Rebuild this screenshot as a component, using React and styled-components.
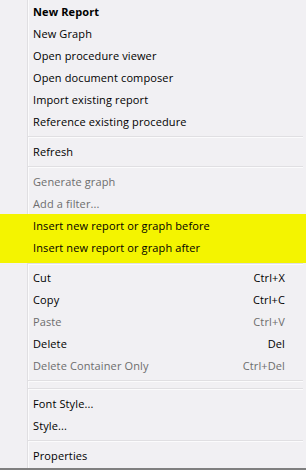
import React from "react";
import styled, { createGlobalStyle } from "styled-components";

const Global = createGlobalStyle`
  html, body { margin: 0; padding: 0; background: #f1f0f3; }
  body { font-family: "Open Sans", "Noto Sans", sans-serif; }
`;

const Menu = styled.div`
  width: 306px;
  height: 470px;
  box-sizing: border-box;
  display: flex;
  flex-direction: column;
  background-color: #f1f0f3;
  background-image: linear-gradient(
    to right,
    transparent 27px,
    #e0dfe2 27px,
    #e0dfe2 28px,
    #fbfbfc 28px,
    #fbfbfc 29px,
    transparent 29px
  );
  border-bottom: 2px solid #7f7f7f;
  overflow: hidden;
`;

const Item = styled.div`
  height: 22px;
  flex: none;
  display: flex;
  align-items: center;
  justify-content: space-between;
  padding: 0 21px 0 33px;
  font-size: 11px;
  letter-spacing: 0.12px;
  font-weight: ${(p) => (p.$bold ? 700 : 400)};
  color: ${(p) => (p.$disabled ? "#6d6d6d" : "#000")};
  white-space: nowrap;
`;

const Shortcut = styled.span`
  color: inherit;
`;

const Separator = styled.div`
  flex: none;
  height: ${(p) => (p.$compact ? "3px" : "8px")};
  margin-left: 28px;
  margin-right: 3px;
  box-sizing: border-box;
  padding-top: ${(p) => (p.$compact ? "0" : "4px")};
  &::before {
    content: "";
    display: block;
    height: 1px;
    background: #e0dfe2;
    border-bottom: 1px solid #fbfbfc;
  }
`;

const Highlight = styled.div`
  flex: none;
  background: #f4f400;
  padding-bottom: 5px;
  display: flex;
  flex-direction: column;
`;

const Entry = ({ label, shortcut, bold, disabled }) => (
  <Item $bold={bold} $disabled={disabled}>
    <span>{label}</span>
    {shortcut && <Shortcut>{shortcut}</Shortcut>}
  </Item>
);

export default function App() {
  return (
    <>
      <Global />
      <Menu>
        <Entry label="New Report" bold />
        <Entry label="New Graph" />
        <Entry label="Open procedure viewer" />
        <Entry label="Open document composer" />
        <Entry label="Import existing report" />
        <Entry label="Reference existing procedure" />
        <Separator />
        <Entry label="Refresh" />
        <Separator />
        <Entry label="Generate graph" disabled />
        <Entry label="Add a filter..." disabled />
        <Highlight>
          <Entry label="Insert new report or graph before" />
          <Entry label="Insert new report or graph after" />
        </Highlight>
        <Separator $compact />
        <Entry label="Cut" shortcut="Ctrl+X" />
        <Entry label="Copy" shortcut="Ctrl+C" />
        <Entry label="Paste" shortcut="Ctrl+V" disabled />
        <Entry label="Delete" shortcut="Del" />
        <Entry label="Delete Container Only" shortcut="Ctrl+Del" disabled />
        <Separator />
        <Separator />
        <Entry label="Font Style..." />
        <Entry label="Style..." />
        <Separator />
        <Entry label="Properties" />
      </Menu>
    </>
  );
}
